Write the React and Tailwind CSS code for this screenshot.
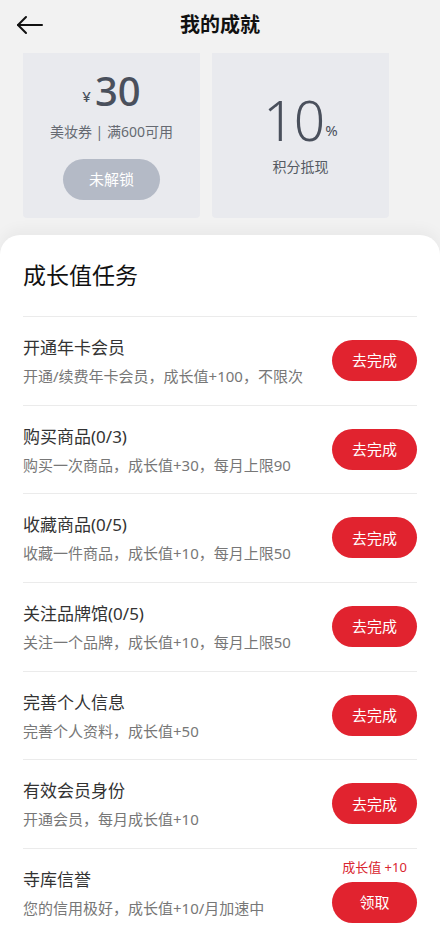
import React from "react";

const tasks = [
  { title: "开通年卡会员", desc: "开通/续费年卡会员，成长值+100，不限次", action: "去完成" },
  { title: "购买商品(0/3)", desc: "购买一次商品，成长值+30，每月上限90", action: "去完成" },
  { title: "收藏商品(0/5)", desc: "收藏一件商品，成长值+10，每月上限50", action: "去完成" },
  { title: "关注品牌馆(0/5)", desc: "关注一个品牌，成长值+10，每月上限50", action: "去完成" },
  { title: "完善个人信息", desc: "完善个人资料，成长值+50", action: "去完成" },
  { title: "有效会员身份", desc: "开通会员，每月成长值+10", action: "去完成" },
  { title: "寺库信誉", desc: "您的信用极好，成长值+10/月加速中", action: "领取", reward: "成长值 +10" },
];

const BackArrow = () => (
  <svg width="28" height="20" viewBox="0 0 28 20" fill="none" stroke="#111" strokeWidth="2" strokeLinecap="round" strokeLinejoin="round">
    <path d="M26 10H2" />
    <path d="M10 2L2 10L10 18" />
  </svg>
);

export default function App() {
  return (
    <div
      className="w-[440px] h-[928px] overflow-hidden bg-[#f2f2f2] flex flex-col"
      style={{ fontFamily: '"Noto Sans", "Noto Sans CJK SC", sans-serif' }}
    >
      {/* header */}
      <div className="h-[53px] shrink-0 relative flex items-center justify-center">
        <button className="absolute left-[16px] top-[15px]">
          <BackArrow />
        </button>
        <span className="text-[20px] font-bold text-[#111] -mt-[4px]">我的成就</span>
      </div>

      {/* achievement cards */}
      <div className="flex gap-[12px] px-[23px] shrink-0">
        <div className="w-[177px] h-[165px] bg-[#e9eaee] rounded-b-[4px] flex flex-col items-center">
          <div className="flex items-end mt-[14px] text-[#4a505c]">
            <span className="text-[15px] font-medium mb-[8px] mr-[4px]">¥</span>
            <span className="text-[40px] leading-[48px] font-medium">30</span>
          </div>
          <span className="text-[14px] text-[#666a72] mt-[6px]">美妆券 | 满600可用</span>
          <div className="mt-[17px] w-[97px] h-[41px] rounded-full bg-[#b4bac6] text-white text-[15px] flex items-center justify-center">
            未解锁
          </div>
        </div>
        <div className="w-[177px] h-[165px] bg-[#e9eaee] rounded-b-[4px] flex flex-col items-center">
          <div className="flex items-end mt-[36px] text-[#4a505c]">
            <span className="text-[55px] leading-[62px] font-light tracking-[-1px]">10</span>
            <span className="text-[15px] mb-[10px] ml-[1px]">%</span>
          </div>
          <span className="text-[14px] text-[#555a62] mt-[5px]">积分抵现</span>
        </div>
      </div>

      {/* tasks sheet */}
      <div className="mt-[17px] flex-1 bg-white rounded-t-[20px] shadow-[0_-6px_14px_rgba(0,0,0,0.04)] px-[23px]">
        <div className="h-[81px] flex items-center text-[23px] text-[#111]">成长值任务</div>
        {tasks.map((t) => (
          <div key={t.title} className="h-[88.67px] border-t border-[#ebebeb] flex items-start justify-between">
            <div className="flex flex-col pt-[19px]">
              <span className="text-[17px] text-[#333] leading-[24px]">{t.title}</span>
              <span className="text-[15px] text-[#777] leading-[20px] mt-[6px]">{t.desc}</span>
            </div>
            {t.reward ? (
              <div className="flex flex-col items-center pt-[9px]">
                <span className="text-[13px] text-[#d9252f] leading-[18px] mb-[6px]">{t.reward}</span>
                <button className="w-[85px] h-[41px] rounded-full bg-[#e1232f] text-white text-[15px] flex items-center justify-center">
                  {t.action}
                </button>
              </div>
            ) : (
              <div className="pt-[23px]">
                <button className="w-[85px] h-[41px] rounded-full bg-[#e1232f] text-white text-[15px] flex items-center justify-center">
                  {t.action}
                </button>
              </div>
            )}
          </div>
        ))}
      </div>
    </div>
  );
}
